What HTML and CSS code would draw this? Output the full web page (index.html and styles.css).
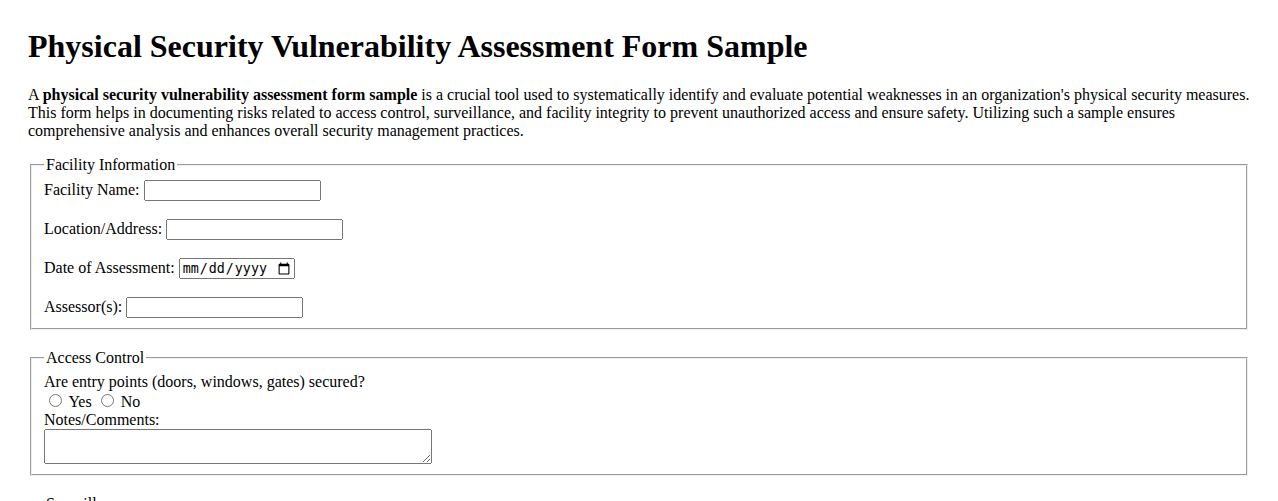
FILE: index.html
```html
<!DOCTYPE html>
<html lang="en">
<head>
<meta charset="utf-8">
<title>Physical Security Vulnerability Assessment Form Sample</title>
<link rel="stylesheet" href="styles.css">
</head>
<body>
<h1 class="title">Physical Security Vulnerability Assessment Form Sample</h1>
<p class="intro">A <strong>physical security vulnerability assessment form sample</strong> is a crucial tool used to systematically identify and evaluate potential weaknesses in an organization's physical security measures. This form helps in documenting risks related to access control, surveillance, and facility integrity to prevent unauthorized access and ensure safety. Utilizing such a sample ensures comprehensive analysis and enhances overall security management practices.</p>
<form class="form">
<fieldset class="section">
<legend>Facility Information</legend>
<label for="fname">Facility Name:</label> <input class="text-input" type="text" id="fname"><br><br>
<label for="loc">Location/Address:</label> <input class="text-input" type="text" id="loc"><br><br>
<label for="date">Date of Assessment:</label> <input class="date-input" type="date" id="date"><br><br>
<label for="assessor">Assessor(s):</label> <input class="text-input" type="text" id="assessor">
</fieldset>
<fieldset class="section">
<legend>Access Control</legend>
<label>Are entry points (doors, windows, gates) secured?</label><br>
<input type="radio" name="entry" id="entry-yes"> <label for="entry-yes">Yes</label>
<input type="radio" name="entry" id="entry-no"> <label for="entry-no">No</label><br>
<label for="ac-notes">Notes/Comments:</label><br>
<textarea class="notes" id="ac-notes"></textarea>
</fieldset>
<fieldset class="section">
<legend>Surveillance</legend>
<label>Are surveillance cameras installed and operational?</label><br>
<input type="radio" name="cam" id="cam-yes"> <label for="cam-yes">Yes</label>
<input type="radio" name="cam" id="cam-no"> <label for="cam-no">No</label><br>
<label for="sv-notes">Notes/Comments:</label><br>
<textarea class="notes" id="sv-notes"></textarea>
</fieldset>
</form>
</body>
</html>
```

FILE: styles.css
```css
html {
  background: #ffffff;
}

body {
  margin: 28px;
  font-family: "Liberation Serif", "Times New Roman", serif;
  font-size: 16px;
  color: #000000;
}

.title {
  font-size: 32px;
  font-weight: bold;
  margin: 0 0 21.44px;
}

.intro {
  margin: 16px 0;
}

.section {
  margin: 0 2px 19px;
}

.text-input {
  box-sizing: border-box;
  width: 177px;
  height: 21px;
}

.date-input {
  box-sizing: border-box;
  width: 116px;
  height: 21px;
}

.notes {
  box-sizing: border-box;
  width: 388px;
  height: 35px;
  vertical-align: top;
}
```
